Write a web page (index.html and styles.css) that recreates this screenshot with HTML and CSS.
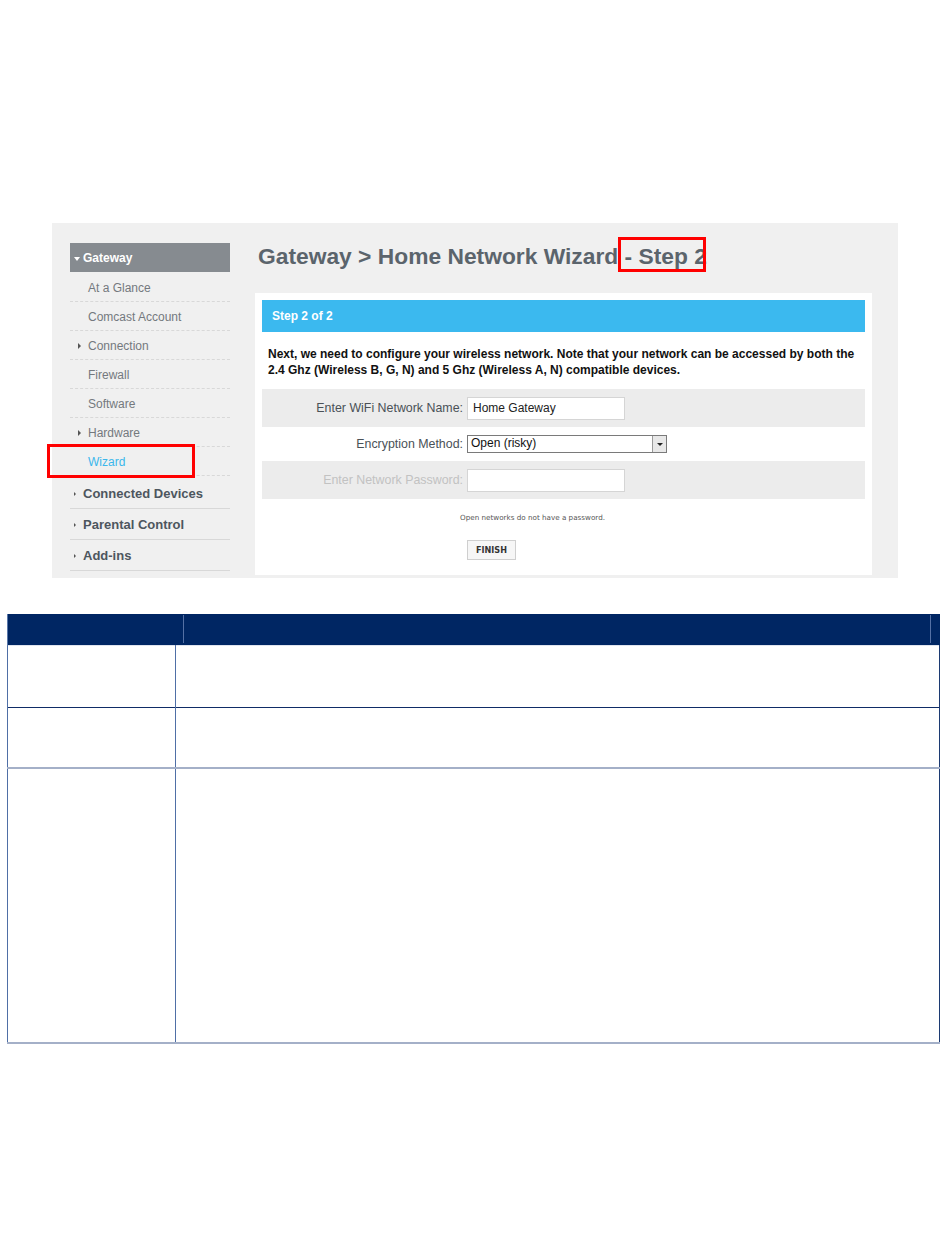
FILE: index.html
```html
<!DOCTYPE html>
<html lang="en">
<head>
  <meta charset="UTF-8">
  <title>Gateway &gt; Home Network Wizard - Step 2</title>
  <link rel="stylesheet" href="styles.css">
</head>
<body>
  <div class="page">
    <div class="shot">
      <!-- left navigation -->
      <ul class="nav">
        <li class="nav-head"><span class="arrow-down"></span>Gateway</li>
        <li class="sub">At a Glance</li>
        <li class="sub">Comcast Account</li>
        <li class="sub"><span class="arrow-right"></span>Connection</li>
        <li class="sub">Firewall</li>
        <li class="sub">Software</li>
        <li class="sub"><span class="arrow-right"></span>Hardware</li>
        <li class="sub active">Wizard<span class="mark mark-nav"></span></li>
        <li class="top first"><span class="arrow-small"></span>Connected Devices</li>
        <li class="top"><span class="arrow-small"></span>Parental Control</li>
        <li class="top"><span class="arrow-small"></span>Add-ins</li>
      </ul>

      <div class="main">
        <h1 class="title">Gateway &gt; Home Network Wizard<span class="step"> - Step 2<span class="mark mark-title"></span></span></h1>
        <div class="card">
          <div class="card-head">Step 2 of 2</div>
          <p class="intro">Next, we need to configure your wireless network. Note that your network can be accessed by both the 2.4 Ghz (Wireless B, G, N) and 5 Ghz (Wireless A, N) compatible devices.</p>
          <div class="row odd">
            <label class="lbl">Enter WiFi Network Name:</label>
            <div class="field">Home Gateway</div>
          </div>
          <div class="row">
            <label class="lbl">Encryption Method:</label>
            <div class="select">Open (risky)<span class="select-btn"><span class="tri"></span></span></div>
          </div>
          <div class="row odd">
            <label class="lbl disabled">Enter Network Password:</label>
            <div class="field"></div>
          </div>
          <p class="note">Open networks do not have a password.</p>
          <div class="actions"><button class="btn">FINISH</button></div>
        </div>
      </div>
    </div>

    <table class="grid">
      <tr class="head"><th class="c1"></th><th class="c2"><span class="rule"></span></th></tr>
      <tr class="r1"><td class="c1"></td><td class="c2"></td></tr>
      <tr class="r2"><td class="c1"></td><td class="c2"></td></tr>
      <tr class="r3"><td class="c1"></td><td class="c2"></td></tr>
    </table>
  </div>
</body>
</html>
```

FILE: styles.css
```css
body {
  margin: 0;
  background: #fff;
  font-family: 'Liberation Sans', Arial, sans-serif;
}

.page {
  padding-top: 223px;
}

/* screenshot panel */
.shot {
  display: flex;
  margin-left: 52px;
  width: 846px;
  height: 355px;
  background: #f0f0f0;
  box-sizing: border-box;
  padding: 20px 0 0 18px;
}

.nav {
  list-style: none;
  margin: 0;
  padding: 0;
  width: 160px;
  flex: none;
}

.nav-head {
  height: 29px;
  line-height: 30px;
  background: #868b90;
  color: #fff;
  font-weight: bold;
  font-size: 12px;
  padding-left: 4px;
}

.arrow-down {
  display: inline-block;
  border-left: 3px solid transparent;
  border-right: 3px solid transparent;
  border-top: 4px solid #fff;
  margin-right: 3px;
  vertical-align: middle;
}

.sub {
  position: relative;
  height: 29px;
  line-height: 31px;
  font-size: 12px;
  color: #74797e;
  padding-left: 18px;
  border-bottom: 1px dashed #d8d8d8;
  box-sizing: border-box;
}

.nav-head + .sub {
  height: 30px;
  line-height: 32px;
}

.arrow-right {
  position: absolute;
  left: 8px;
  top: 12px;
  border-top: 3px solid transparent;
  border-bottom: 3px solid transparent;
  border-left: 3px solid #555;
}

.active {
  color: #3bb7ec;
}

.top {
  position: relative;
  height: 31px;
  line-height: 32px;
  font-size: 13px;
  font-weight: bold;
  color: #4d565e;
  padding-left: 13px;
  border-bottom: 1px solid #d8d8d8;
  box-sizing: border-box;
}

.top.first {
  height: 33px;
  line-height: 35px;
}

.arrow-small {
  position: absolute;
  left: 4px;
  top: 14px;
  border-top: 2px solid transparent;
  border-bottom: 2px solid transparent;
  border-left: 2px solid #555;
}

.top.first .arrow-small {
  top: 16px;
}

/* red highlight boxes */
.mark {
  position: absolute;
  border: 3px solid #f00;
  box-sizing: border-box;
}

.mark-nav {
  left: -23px;
  top: -3px;
  width: 148px;
  height: 34px;
}

.mark-title {
  left: 0;
  top: -6px;
  width: 88px;
  height: 35px;
}

.main {
  margin-left: 25px;
  width: 617px;
}

.title {
  margin: 0 0 0 3px;
  font-size: 22.8px;
  line-height: 26px;
  color: #5b646c;
  height: 50px;
  white-space: nowrap;
}

.step {
  position: relative;
}

.card {
  background: #fff;
  height: 282px;
  padding: 7px 7px 0 7px;
  box-sizing: border-box;
}

.card-head {
  height: 32px;
  line-height: 33px;
  background: #3bb9ef;
  color: #fff;
  font-weight: bold;
  font-size: 12px;
  padding-left: 10px;
}

.intro {
  margin: 14px 0 0 6px;
  font-size: 12px;
  font-weight: bold;
  line-height: 16px;
  color: #111;
  height: 43px;
}

.row {
  display: flex;
  align-items: center;
  height: 34px;
}

.row.odd {
  background: #ececec;
  height: 38px;
}

.lbl {
  width: 201px;
  text-align: right;
  font-size: 12.4px;
  color: #4a5157;
  padding-right: 4px;
}

.lbl.disabled {
  color: #c2c2c2;
}

.field {
  width: 158px;
  height: 23px;
  background: #fff;
  border: 1px solid #d5d5d5;
  box-sizing: border-box;
  font-size: 12px;
  line-height: 21px;
  padding-left: 5px;
  color: #222;
}

.select {
  position: relative;
  width: 200px;
  height: 18px;
  background: #fff;
  border: 1px solid #7a7a7a;
  box-sizing: border-box;
  font-size: 12px;
  line-height: 14px;
  padding-left: 3px;
  color: #111;
}

.select-btn {
  position: absolute;
  right: 0;
  top: 0;
  width: 14px;
  height: 16px;
  background: #e8e8e8;
  border-left: 1px solid #9a9a9a;
  box-sizing: border-box;
}

.tri {
  position: absolute;
  left: 4px;
  top: 7px;
  border-left: 3px solid transparent;
  border-right: 3px solid transparent;
  border-top: 3px solid #222;
}

.note {
  margin: 14px 0 0 198px;
  font-family: 'DejaVu Sans', sans-serif;
  font-size: 7.2px;
  color: #555;
}

.actions {
  margin: 17px 0 0 205px;
}

.btn {
  width: 49px;
  height: 20px;
  background: #f6f6f6;
  border: 1px solid #cfcfcf;
  font-family: 'DejaVu Sans Condensed', 'DejaVu Sans', sans-serif;
  font-weight: bold;
  font-size: 9px;
  color: #333;
  padding: 0;
}

/* table below */
.grid {
  margin: 36px 0 0 7px;
  width: 933px;
  border-collapse: collapse;
  table-layout: fixed;
}

.grid th,
.grid td {
  padding: 0;
}

.grid .head {
  height: 31px;
  background: #002663;
}

.grid th.c1 {
  width: 167px;
  border-left: 1px solid #5a78aa;
}

.grid th.c2 {
  position: relative;
}

.rule {
  position: absolute;
  left: 8px;
  top: 1px;
  bottom: 2px;
  border-left: 1px solid #5470a4;
}

.grid th.c2::after {
  content: "";
  position: absolute;
  right: 9px;
  top: 1px;
  bottom: 2px;
  border-left: 1px solid #5470a4;
}

.grid td.c1 {
  border-left: 1px solid #4f6fa6;
  border-right: 1px solid #4f6fa6;
}

.grid td.c2 {
  border-right: 1px solid #1c3a72;
}

.grid .r1 {
  height: 62px;
  border-top: 1px solid #dfe4ee;
  border-bottom: 1px solid #0f2c66;
}

.grid .r2 {
  height: 61px;
  border-bottom: 2px solid #a4b0c8;
}

.grid .r3 {
  height: 275px;
  border-bottom: 2px solid #a4b0c8;
}
```
